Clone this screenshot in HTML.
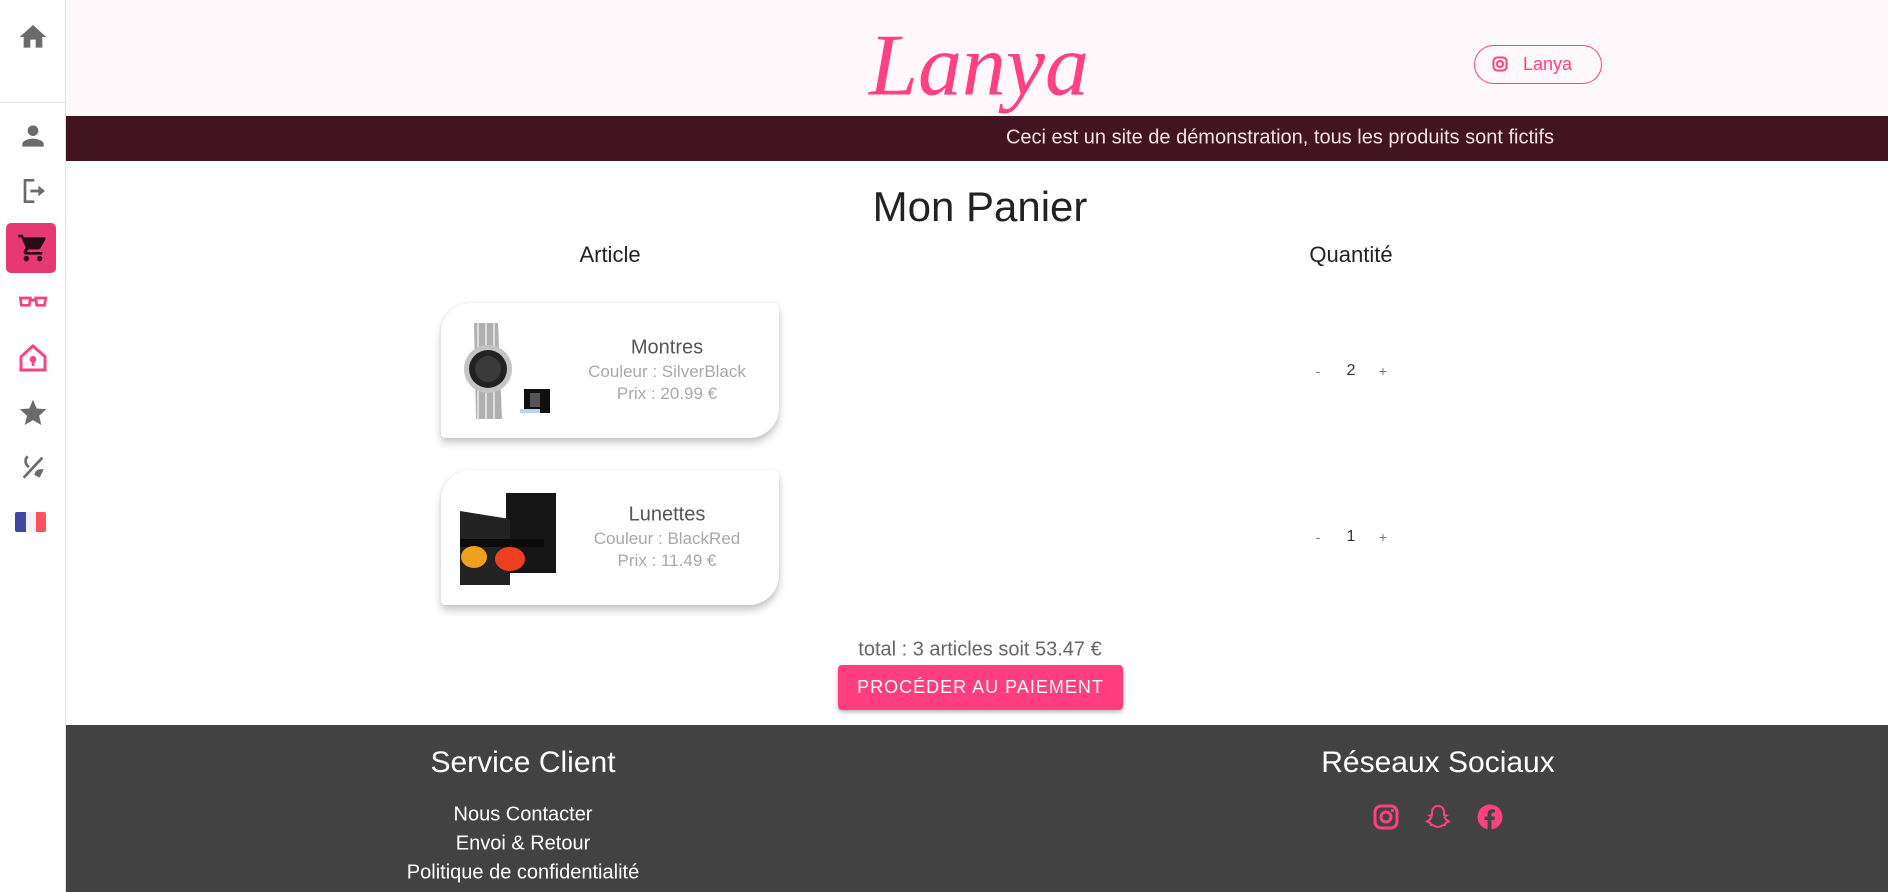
<!DOCTYPE html>
<html><head><meta charset="utf-8"><style>
*{margin:0;padding:0;box-sizing:border-box}
body{width:1888px;height:892px;overflow:hidden;font-family:"Liberation Sans",sans-serif;background:#fff;position:relative}
.abs{position:absolute}
.side{left:0;top:0;width:66px;height:892px;border-right:1px solid #e2e2e2;background:#fff}
.ic{position:absolute;left:17px;width:32px;height:32px}
.c{position:absolute;transform:translate(-50%,-50%);white-space:nowrap}
.card{position:absolute;left:441px;width:338px;height:135px;background:#fff;border-radius:30px 6px 30px 4px;box-shadow:0 5px 8px rgba(0,0,0,.22),0 0 3px rgba(0,0,0,.08)}
.q{font-size:14px;color:#777}
</style></head><body>
<div class="abs" style="left:66px;top:0;width:1822px;height:116px;background:#fff8fa"></div>
<div class="abs" style="left:66px;top:116px;width:1822px;height:45px;background:#421421"></div>
<div class="c" style="left:1280px;top:138px;color:#f2e2e8;font-size:20px">Ceci est un site de démonstration, tous les produits sont fictifs</div>
<div class="c" style="left:979px;top:66px;color:#ff4081;font-family:'Liberation Serif',serif;font-style:italic;font-size:88px">Lanya</div>
<div class="abs" style="left:1474px;top:45px;width:128px;height:39px;border:1.5px solid #ff4081;border-radius:20px;color:#ff4081;font-size:18px;line-height:36px;padding-left:48px">Lanya
<svg class="abs" style="left:17px;top:10px" width="16" height="16" viewBox="0 0 16 16"><rect x="1.5" y="1.5" width="13" height="13" rx="3.5" fill="none" stroke="#ff4081" stroke-width="2"/><circle cx="8" cy="8" r="3" fill="none" stroke="#ff4081" stroke-width="2"/></svg></div>

<div class="abs side">
<div class="abs" style="left:0;top:102px;width:66px;height:1px;background:#e2e2e2"></div>
<svg class="ic" style="top:21px" viewBox="0 0 24 24"><path d="M10 20v-6h4v6h5v-8h3L12 3 2 12h3v8z" fill="#6b6b6b"/></svg>
<svg class="ic" style="top:120px" viewBox="0 0 24 24"><path d="M12 12c2.2 0 4-1.8 4-4s-1.8-4-4-4-4 1.8-4 4 1.8 4 4 4zm0 2c-2.7 0-8 1.3-8 4v2h16v-2c0-2.7-5.3-4-8-4z" fill="#6b6b6b"/></svg>
<svg class="ic" style="top:175px" viewBox="0 0 24 24"><path d="M13 4H6v16h7" fill="none" stroke="#6b6b6b" stroke-width="2"/><path d="M10 11h6V8l5 4-5 4v-3h-6z" fill="#6b6b6b"/></svg>
<div class="abs" style="left:6px;top:223px;width:50px;height:50px;background:#e63872;border-radius:5px"></div>
<svg class="ic" style="top:232px" viewBox="0 0 24 24"><path d="M7 18c-1.1 0-2 .9-2 2s.9 2 2 2 2-.9 2-2-.9-2-2-2zM1 2v2h2l3.6 7.6-1.4 2.4c-.1.3-.2.6-.2 1 0 1.1.9 2 2 2h12v-2H7.4l1.1-2h7.5c.8 0 1.4-.4 1.7-1l3.6-6.5L21.4 4H5.2l-.9-2zm16 16c-1.1 0-2 .9-2 2s.9 2 2 2 2-.9 2-2-.9-2-2-2z" fill="#2a0a14"/></svg>
<svg class="ic" style="top:286px" viewBox="0 0 24 24"><path d="M2.5 9h7.5l-.8 5.5H3.3zM14 9h7.5l-.8 5.5h-5.9zM10 10.5h4" fill="none" stroke="#ff4081" stroke-width="2"/></svg>
<svg class="ic" style="top:342px" viewBox="0 0 24 24"><path d="M12 3 3 11v10h18V11z" fill="none" stroke="#ff4081" stroke-width="2.2"/><circle cx="12" cy="13" r="2.5" fill="#ff4081"/><rect x="11" y="14" width="2" height="4" fill="#ff4081"/></svg>
<svg class="ic" style="top:397px" viewBox="0 0 24 24"><path d="M12 17.3 18.2 21l-1.6-7L22 9.2l-7.2-.6L12 2 9.2 8.6 2 9.2 7.5 14l-1.7 7z" fill="#6b6b6b"/></svg>
<svg class="ic" style="top:451px" viewBox="0 0 24 24"><path d="M5 20 19 5" stroke="#6b6b6b" stroke-width="2"/><path d="M8 4a5 5 0 0 0 1 8" fill="none" stroke="#6b6b6b" stroke-width="2"/><path d="M13 18a5 5 0 0 1 7-4l-3 6z" fill="#6b6b6b"/></svg>
<div class="abs" style="left:15px;top:512px;width:11px;height:20px;background:#3f47a0;border-radius:2px 0 0 2px"></div>
<div class="abs" style="left:26px;top:512px;width:10px;height:20px;background:#f2f2f2"></div>
<div class="abs" style="left:36px;top:512px;width:10px;height:20px;background:#ff5060;border-radius:0 2px 2px 0"></div>
</div>

<div class="c" style="left:980px;top:207px;font-size:42px;color:#222">Mon Panier</div>
<div class="c" style="left:610px;top:255px;font-size:22px;color:#222">Article</div>
<div class="c" style="left:1351px;top:255px;font-size:22px;color:#222">Quantité</div>

<div class="card" style="top:303px">
<svg class="abs" style="left:19px;top:20px" width="96" height="96" viewBox="0 0 96 96"><path d="M14 0h24l4 96H16z" fill="#b0b0b0"/><path d="M18 0v96M26 0v96M34 0v96" stroke="#ddd" stroke-width="2"/><circle cx="28" cy="46" r="24" fill="#c4c4c4"/><circle cx="28" cy="46" r="19" fill="#222"/><circle cx="28" cy="46" r="13" fill="#3a3a3a"/><rect x="64" y="66" width="26" height="24" fill="#111"/><rect x="70" y="70" width="10" height="14" fill="#555"/><rect x="60" y="86" width="20" height="4" fill="#b8d4ee"/></svg>
<div class="c" style="left:226px;top:45px;font-size:20px;color:#555">Montres</div>
<div class="c" style="left:226px;top:69px;font-size:17px;color:#a8a8a8">Couleur : SilverBlack</div>
<div class="c" style="left:226px;top:91px;font-size:17px;color:#a8a8a8">Prix : 20.99 €</div>
</div>
<div class="card" style="top:470px">
<svg class="abs" style="left:19px;top:23px" width="96" height="92" viewBox="0 0 96 92"><rect x="46" y="0" width="50" height="80" fill="#151515"/><path d="M0 18l50 8v66H0z" fill="#222"/><path d="M0 46h84v8H0z" fill="#0a0a0a"/><ellipse cx="14" cy="64" rx="13" ry="11" fill="#f0a020"/><ellipse cx="50" cy="66" rx="15" ry="12" fill="#ee4020"/></svg>
<div class="c" style="left:226px;top:45px;font-size:20px;color:#555">Lunettes</div>
<div class="c" style="left:226px;top:69px;font-size:17px;color:#a8a8a8">Couleur : BlackRed</div>
<div class="c" style="left:226px;top:91px;font-size:17px;color:#a8a8a8">Prix : 11.49 €</div>
</div>
<div class="c q" style="left:1318px;top:371px">-</div><div class="c" style="left:1351px;top:371px;font-size:16px;color:#333">2</div><div class="c q" style="left:1383px;top:371px">+</div>
<div class="c q" style="left:1318px;top:537px">-</div><div class="c" style="left:1351px;top:537px;font-size:16px;color:#333">1</div><div class="c q" style="left:1383px;top:537px">+</div>

<div class="c" style="left:980px;top:650px;font-size:20px;color:#666">total : 3 articles soit 53.47 €</div>
<div class="abs" style="left:838px;top:665px;width:285px;height:45px;background:#ff3d7f;border-radius:4px;box-shadow:0 2px 4px rgba(0,0,0,.3);color:#fff;font-size:18px;letter-spacing:1px;text-align:center;line-height:45px">PROCÉDER AU PAIEMENT</div>

<div class="abs" style="left:66px;top:725px;width:1822px;height:167px;background:#424242"></div>
<div class="c" style="left:523px;top:763px;font-size:30px;color:#fff">Service Client</div>
<div class="c" style="left:523px;top:815px;font-size:20px;color:#fff">Nous Contacter</div>
<div class="c" style="left:523px;top:844px;font-size:20px;color:#fff">Envoi &amp; Retour</div>
<div class="c" style="left:523px;top:873px;font-size:20px;color:#fff">Politique de confidentialité</div>
<div class="c" style="left:1438px;top:763px;font-size:30px;color:#fff">Réseaux Sociaux</div>
<svg class="abs" style="left:1373px;top:804px" width="26" height="26" viewBox="0 0 26 26"><rect x="2" y="2" width="22" height="22" rx="6" fill="none" stroke="#ff4081" stroke-width="3"/><circle cx="13" cy="13" r="5" fill="none" stroke="#ff4081" stroke-width="3"/><circle cx="19.5" cy="6.5" r="1.6" fill="#ff4081"/></svg>
<svg class="abs" style="left:1424px;top:804px" width="28" height="26" viewBox="0 0 28 26"><path d="M14 2c-4 0-6 3-6 6v3l-2.5 .5 2 1.5C6.5 16 4 17 3 17.5c1 .8 3 1 3.5 1.5L7 21c2 0 3 .3 4 1.2 1.5 1 4.5 1 6 0 1-.9 2-1.2 4-1.2l.5-2c.5-.5 2.5-.7 3.5-1.5-1-.5-3.5-1.5-4.5-4.5l2-1.5L20 11V8c0-3-2-6-6-6z" fill="none" stroke="#ff4081" stroke-width="2"/></svg>
<svg class="abs" style="left:1477px;top:804px" width="26" height="26" viewBox="0 0 26 26"><circle cx="13" cy="13" r="12.5" fill="#ff4081"/><path d="M14.5 26V16h3l.5-3.5h-3.5V10.3c0-1 .4-1.8 1.8-1.8H18V5.4c-.4 0-1.5-.2-2.8-.2-2.8 0-4.6 1.7-4.6 4.7v2.6H7.6V16h3v10z" fill="#424242"/></svg>
</body></html>
